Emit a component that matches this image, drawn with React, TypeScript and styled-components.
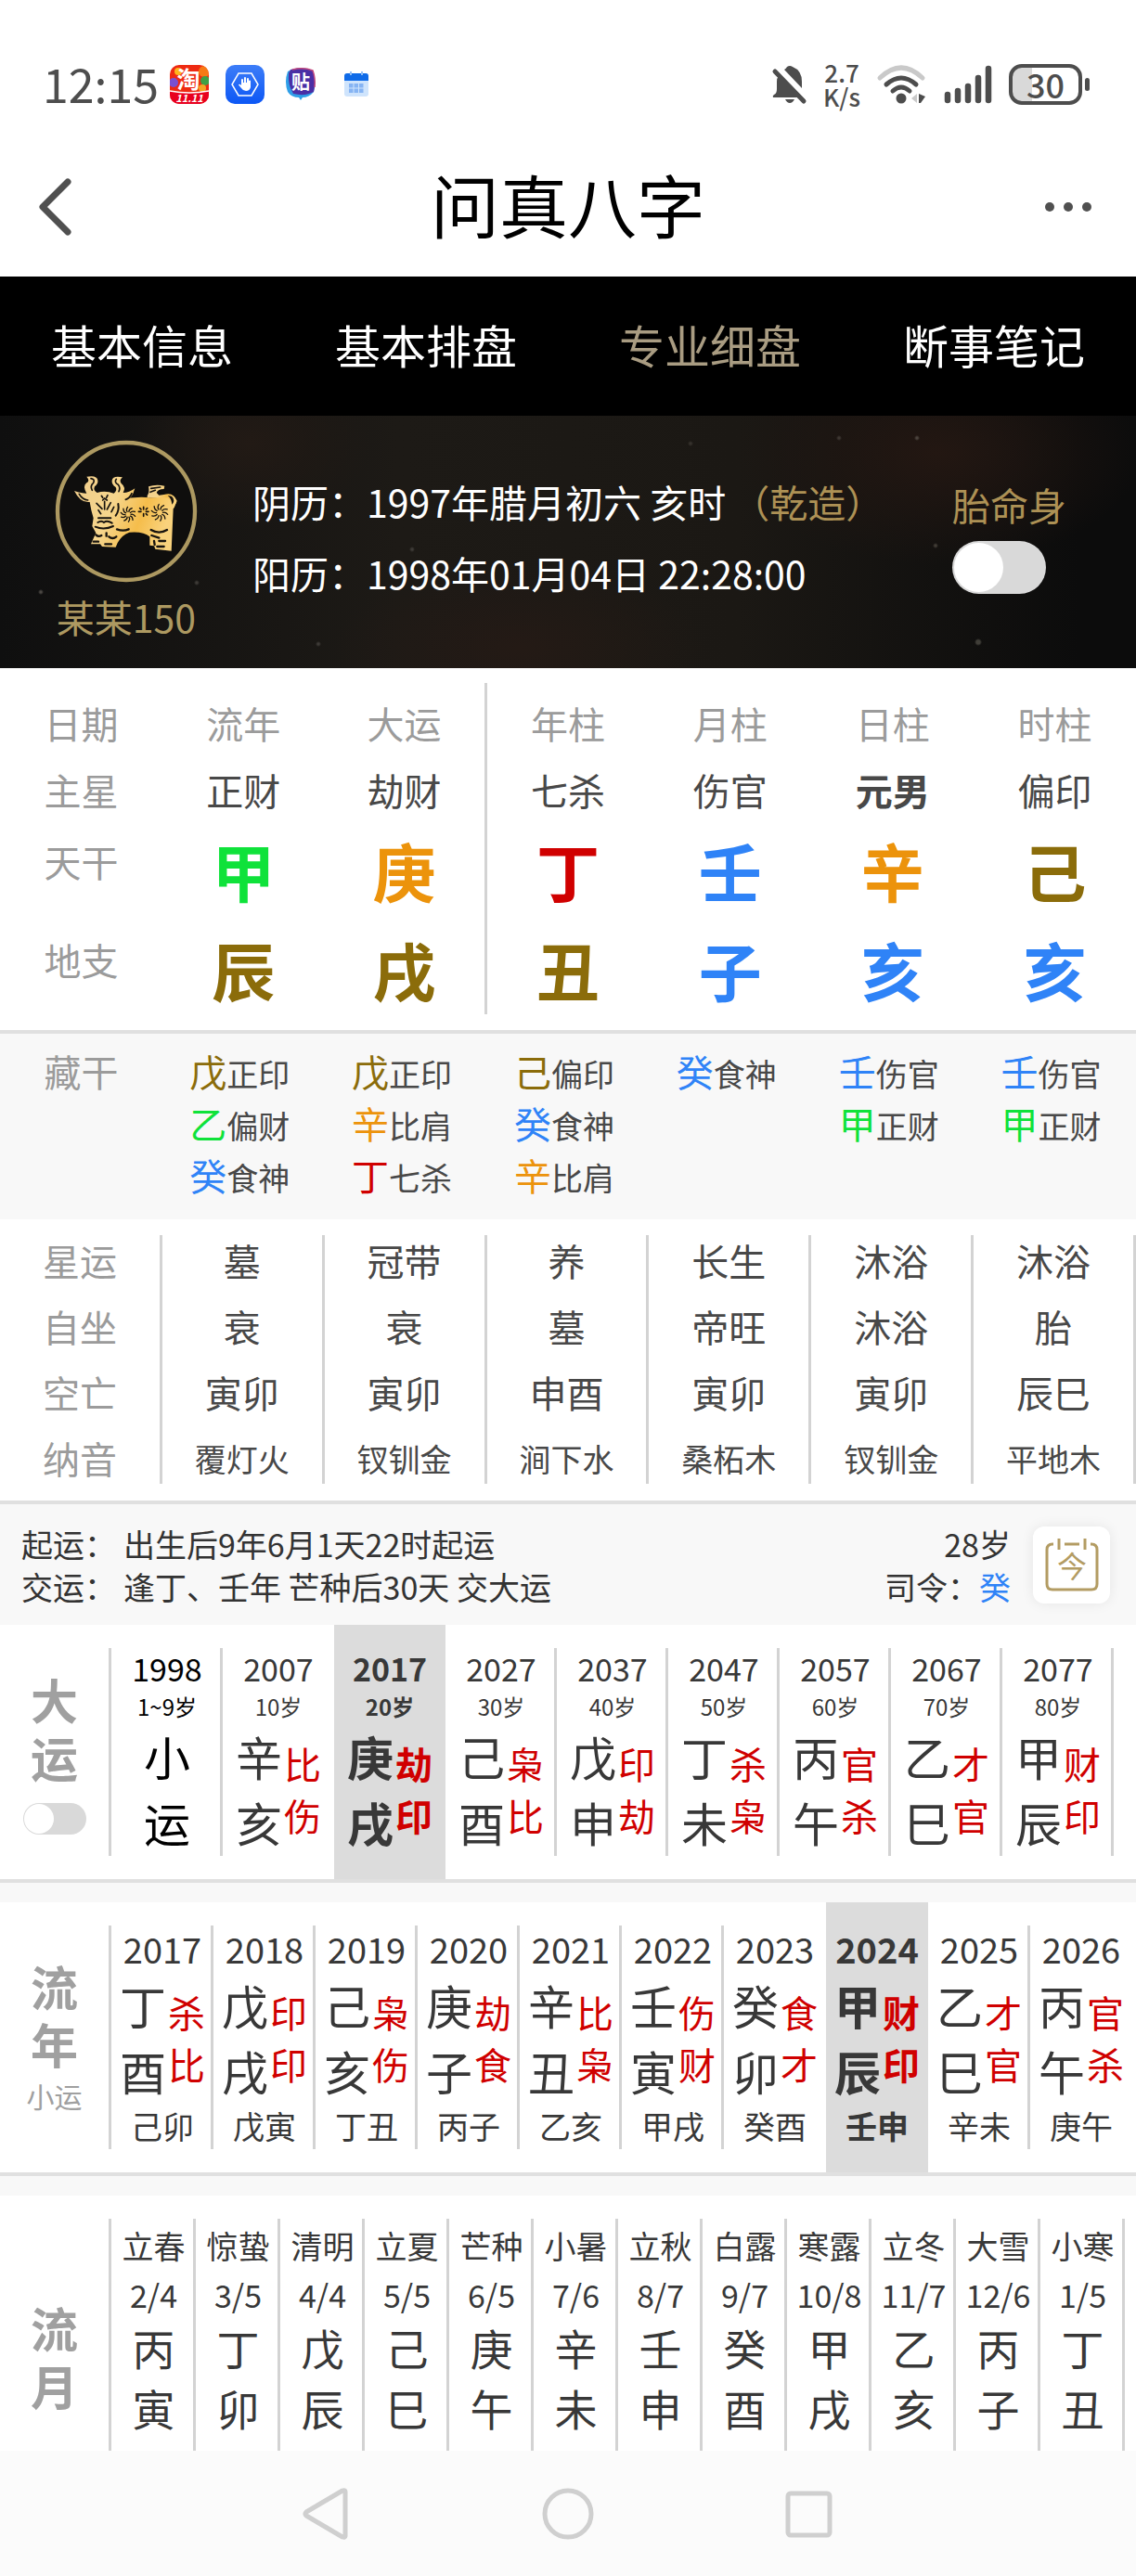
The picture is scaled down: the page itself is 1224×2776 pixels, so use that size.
import React from 'react';
import styled, { createGlobalStyle } from 'styled-components';

const GlobalStyle = createGlobalStyle`
  *, *::before, *::after { box-sizing: border-box; }
  body {
    margin: 0;
    background: #fff;
    color: #333;
    font-family: "Noto Sans CJK SC", "Noto Sans", sans-serif;
  }
  button { font: inherit; color: inherit; background: none; border: 0; padding: 0; margin: 0; }
`;

const GOLD = '#ad9961';
const LINE = '#d3d3d3';

const ELEMENT = {
  wood: '#0fe23a',
  fire: '#d00000',
  earth: '#8b6c0a',
  metal: '#ec930b',
  water: '#2f83f7',
};
type Element = keyof typeof ELEMENT;

const Page = styled.div`
  min-height: 100vh;
  display: flex;
  flex-direction: column;
`;

/* ---------- status bar ---------- */

const StatusBar = styled.div`
  height: 148px;
  padding: 34px 50px 0 46px;
  display: flex;
  align-items: center;
  justify-content: space-between;
  color: #4d4d4d;
`;

const StatusGroup = styled.div<{ $gap: number }>`
  display: flex;
  align-items: center;
  gap: ${(p) => p.$gap}px;
  svg { overflow: visible; }
`;

const Clock = styled.span`
  font-size: 50px;
  line-height: 66px;
  padding-bottom: 4px;
`;

const NetSpeed = styled.span`
  font-size: 26px;
  line-height: 26px;
  text-align: center;
  font-weight: 500;
`;

const Battery = styled.span`
  display: flex;
  align-items: center;
  gap: 3px;
  &::after {
    content: '';
    width: 5px;
    height: 14px;
    border-radius: 3px;
    background: #4d4d4d;
  }
`;

const BatteryBody = styled.span`
  width: 79px;
  height: 44px;
  border: 4px solid #4d4d4d;
  border-radius: 14px;
  background: linear-gradient(to right, #d9d9d9 30%, #fff 30%);
  font-size: 36px;
  line-height: 34px;
  font-weight: 500;
  text-align: center;
`;

/* ---------- title bar ---------- */

const TitleBar = styled.header`
  height: 150px;
  padding: 0 42px;
  display: flex;
  align-items: center;
  justify-content: space-between;
`;

const Title = styled.h1`
  margin: 0;
  padding-bottom: 8px;
  font-size: 74px;
  line-height: 90px;
  font-weight: 400;
  color: #000;
`;

const IconButton = styled.button`
  width: 56px;
  height: 80px;
  display: flex;
  align-items: center;
  justify-content: center;
`;

/* ---------- tabs ---------- */

const Tabs = styled.nav`
  height: 150px;
  background: #000;
  display: grid;
  grid-template-columns: repeat(4, 1fr);
`;

const Tab = styled.button<{ $active?: boolean }>`
  font-size: 49px;
  padding-bottom: 6px;
  color: ${(p) => (p.$active ? '#a99c82' : '#fff')};
`;

/* ---------- profile ---------- */

const Profile = styled.section`
  height: 272px;
  padding-right: 75px;
  display: grid;
  grid-template-columns: 272px 1fr auto;
  align-items: center;
  background-color: #141210;
  background-image:
    radial-gradient(circle at 44px 190px, #4a4743 0 1px, transparent 3px),
    radial-gradient(circle at 212px 180px, #3d3a36 0 1px, transparent 3px),
    radial-gradient(circle at 343px 246px, #3d3a36 0 1px, transparent 3px),
    radial-gradient(circle at 444px 144px, #3d3a36 0 1px, transparent 3px),
    radial-gradient(circle at 744px 30px, #35312c 0 1px, transparent 3px),
    radial-gradient(circle at 904px 24px, #3d3631 0 1px, transparent 3px),
    radial-gradient(circle at 988px 24px, #4a423c 0 1px, transparent 3px),
    radial-gradient(circle at 1008px 140px, #403b35 0 1px, transparent 3px),
    radial-gradient(circle at 1054px 244px, #403e38 0 2px, transparent 4px),
    radial-gradient(ellipse 130px 90px at 270px 30px, #221a15, transparent),
    radial-gradient(ellipse 220px 120px at 1010px 40px, #231712, transparent),
    radial-gradient(ellipse 200px 90px at 560px 250px, #241a15, transparent),
    linear-gradient(to right, #0f0f0f, #1d1a16 35%, #1b1814 65%, #0c0c0c 95%);
`;

const Avatar = styled.div`
  display: flex;
  flex-direction: column;
  align-items: center;
  padding-top: 6px;
  color: ${GOLD};
  font-size: 41px;
  line-height: 72px;
  svg { display: block; }
`;

const Dates = styled.dl`
  margin: 0;
  padding-bottom: 10px;
  display: grid;
  grid-template-columns: auto 1fr;
  font-size: 41px;
  line-height: 77px;
  color: #fff;
  dt, dd { margin: 0; white-space: nowrap; }
`;

const Gender = styled.span`
  margin-left: 6px;
  color: #ad9155;
`;

const SwitchLabel = styled.label`
  display: flex;
  flex-direction: column;
  gap: 12px;
  padding-bottom: 14px;
  font-size: 41px;
  line-height: 56px;
  color: #ad9155;
`;

const Switch = styled.input.attrs({ type: 'checkbox' })<{ $small?: boolean }>`
  appearance: none;
  margin: 0;
  width: ${(p) => (p.$small ? 68 : 101)}px;
  height: ${(p) => (p.$small ? 34 : 57)}px;
  padding: ${(p) => (p.$small ? 1 : 2)}px;
  border-radius: 29px;
  background: #d9d9d9;
  display: flex;
  &::before {
    content: '';
    height: 100%;
    aspect-ratio: 1;
    border-radius: 50%;
    background: #fff;
  }
  &:checked { background: ${GOLD}; justify-content: flex-end; }
`;

/* ---------- chart tables ---------- */

const Panel = styled.section<{ $shade?: boolean; $rule?: boolean; $pad: string }>`
  padding: ${(p) => p.$pad};
  background: ${(p) => (p.$shade ? '#f8f8f8' : '#fff')};
  border-bottom: ${(p) => (p.$rule ? '4px solid #e0e0e0' : '0')};
`;

const ChartTable = styled.table<{ $lines?: 'all' | 'third' }>`
  width: 100%;
  table-layout: fixed;
  border-collapse: separate;
  border-spacing: 0;
  text-align: center;
  th, td { padding: 0; font-weight: 400; vertical-align: top; }
  tr > * {
    border-right: ${(p) => (p.$lines === 'all' ? `3px solid ${LINE}` : '0')};
  }
  tr > :nth-child(3) {
    border-right: ${(p) => (p.$lines ? `3px solid ${LINE}` : '0')};
  }
`;

const Row = styled.tr<{ $h: number; $lh: number }>`
  height: ${(p) => p.$h}px;
  line-height: ${(p) => p.$lh}px;
`;

const RowHead = styled.th`
  font-size: 40px;
  color: #9b9b9b;
`;

const Cell = styled.td<{ $muted?: boolean; $strong?: boolean; $small?: boolean }>`
  && { font-weight: ${(p) => (p.$strong ? 700 : 400)}; }
  font-size: ${(p) => (p.$small ? 34 : 40)}px;
  color: ${(p) => (p.$muted ? '#9b9b9b' : '#484848')};
`;

const Pillar = styled.td<{ $el: Element; $lh: number }>`
  && { font-weight: 700; }
  font-size: 68px;
  line-height: ${(p) => p.$lh}px;
  color: ${(p) => ELEMENT[p.$el]};
`;

const HiddenCell = styled.td`
  font-size: 34px;
  color: #484848;
  div { padding-right: 8px; height: 56px; white-space: nowrap; }
`;

const Stem = styled.span<{ $el: Element }>`
  font-size: 40px;
  color: ${(p) => ELEMENT[p.$el]};
`;

/* ---------- luck summary ---------- */

const Summary = styled.section`
  padding: 20px 28px 20px 23px;
  background: #f8f8f8;
  display: flex;
  align-items: center;
  gap: 24px;
  font-size: 34px;
  line-height: 46px;
`;

const SummaryText = styled.div`
  flex: 1;
  height: 90px;
`;

const SummaryLine = styled.div`
  display: flex;
  gap: 8px;
`;

const Push = styled.span`
  margin-left: auto;
`;

const Commander = styled.span`
  color: ${ELEMENT.water};
`;

const TodayButton = styled.button`
  width: 83px;
  height: 83px;
  border-radius: 12px;
  background: #fff;
  box-shadow: 0 0 14px rgba(0, 0, 0, 0.08);
  display: flex;
  align-items: center;
  justify-content: center;
`;

/* ---------- luck cycle strips ---------- */

const Strip = styled.section`
  display: flex;
  background: #fff;
  overflow: hidden;
`;

const StripGap = styled.div`
  height: 25px;
  background: #f8f8f8;
  border-top: 4px solid #e0e0e0;
`;

const StripHead = styled.div<{ $low?: boolean }>`
  width: 120px;
  flex: none;
  padding: ${(p) => (p.$low ? '25px 0 0' : '25px 0')};
  display: flex;
  & > div {
    flex: 1;
    border-right: 3px solid ${LINE};
    display: flex;
    flex-direction: column;
    align-items: center;
    justify-content: ${(p) => (p.$low ? 'flex-end' : 'center')};
    padding-bottom: ${(p) => (p.$low ? 40 : 0)}px;
  }
`;

const StripTitle = styled.h2`
  margin: 0;
  width: 52px;
  font-size: 51px;
  line-height: 62px;
  font-weight: 700;
  color: #a0a0a0;
  text-align: center;
`;

const StripSub = styled.span`
  font-size: 30px;
  line-height: 50px;
  color: #a0a0a0;
`;

const SwitchSlot = styled.label`
  padding-top: 19px;
`;

const Column = styled.button<{ $w: number; $on?: boolean; $black?: boolean; $line: boolean; $last?: boolean }>`
  width: ${(p) => p.$w}px;
  flex: none;
  display: flex;
  padding: ${(p) => (p.$last ? '25px 0 0' : '25px 0')};
  background: ${(p) => (p.$on ? '#dcdcdc' : 'transparent')};
  font-weight: ${(p) => (p.$on ? 700 : 400)};
  color: ${(p) => (p.$black ? '#000' : '#383838')};
  & > span {
    flex: 1;
    display: flex;
    flex-direction: column;
    align-items: center;
    padding-left: 3px;
    padding-bottom: ${(p) => (p.$last ? 14 : 1)}px;
    border-right: 3px solid ${(p) => (p.$line ? LINE : 'transparent')};
  }
`;

const Line = styled.span<{ $size: number; $lh: number }>`
  font-size: ${(p) => p.$size}px;
  line-height: ${(p) => p.$lh}px;
  white-space: nowrap;
`;

const Pair = styled.span`
  display: flex;
  align-items: center;
  gap: 2px;
  height: 142px;
`;

const Stack = styled.span<{ $size: number; $lh: number; $red?: boolean }>`
  width: ${(p) => p.$size}px;
  display: block;
  font-size: ${(p) => p.$size}px;
  line-height: ${(p) => p.$lh}px;
  color: ${(p) => (p.$red ? '#d00000' : 'inherit')};
  word-break: break-all;
`;

/* ---------- system navigation ---------- */

const SystemNav = styled.nav`
  flex: 1;
  min-height: 134px;
  background: #fbfbfb;
  display: flex;
  align-items: center;
  justify-content: center;
  gap: 204px;
`;

/* ---------- drawings ---------- */

const TaobaoIcon = () => (
  <svg width="42" height="42" viewBox="0 0 42 42">
    <defs><clipPath id="tb"><rect width="42" height="42" rx="10" /></clipPath></defs>
    <g clipPath="url(#tb)">
      <rect width="42" height="42" fill="#ee2a12" />
      <circle cx="9" cy="7" r="4" fill="#ffb51c" />
      <circle cx="4" cy="19" r="5" fill="#7a4fd0" />
      <circle cx="37" cy="7" r="6" fill="#f77a15" />
      <circle cx="38" cy="17" r="5" fill="#3fa045" />
      <circle cx="35" cy="25" r="4" fill="#f5a623" />
      <path d="M0 28Q21 32 42 28V42H0Z" fill="#e8001e" />
      <path d="M0 28Q21 32 42 28" fill="none" stroke="#fff" strokeWidth="1.5" />
    </g>
    <text x="20" y="25" fontSize="25" fontWeight="700" fill="#fff" textAnchor="middle">淘</text>
    <text x="21" y="40" fontSize="11" fontWeight="700" fontStyle="italic" fill="#fff" textAnchor="middle">11.11</text>
  </svg>
);

const HandIcon = () => (
  <svg width="42" height="42" viewBox="0 0 42 42">
    <defs>
      <linearGradient id="hb" x1="0" y1="0" x2="0" y2="1">
        <stop offset="0" stopColor="#3d7df8" /><stop offset="1" stopColor="#0c57f5" />
      </linearGradient>
    </defs>
    <rect width="42" height="42" rx="10" fill="url(#hb)" />
    <path d="M14 9H28L35 21L28 33H14L7 21Z" fill="none" stroke="#fff" strokeWidth="1.5" />
    <path d="M18 21V16M21 20V14M24 21V15M26 22V17.500" stroke="#fff" strokeWidth="2" strokeLinecap="round" />
    <path d="M17 19H27V24Q26 28 22 28Q19 28 17 25L14 21.500Q15 20 17 22Z" fill="#fff" />
  </svg>
);

const TiebaIcon = () => (
  <svg width="42" height="42" viewBox="0 0 42 42">
    <path d="M7 7Q21 0 34 6Q38 18 35 29Q30 35 23 35L21 38L19 35Q11 35 7 29Q3 18 7 7Z" fill="#2f9fe8" />
    <path d="M10 5Q24 1 34 6Q38 18 35 29Q26 34 13 31Q7 22 8 9Z" fill="#4a2fa5" />
    <path d="M12 5Q24 2 34 6Q37 14 36 24" fill="none" stroke="#c2477d" strokeWidth="1.500" />
    <text x="21" y="26" fontSize="20" fontWeight="700" fill="#fff" textAnchor="middle">贴</text>
  </svg>
);

const CalendarIcon = () => (
  <svg width="42" height="42" viewBox="0 0 42 42">
    <rect x="8" y="9" width="26" height="25" rx="3" fill="#cfe4fc" />
    <path d="M8 17V12Q8 9 11 9H31Q34 9 34 12V17Z" fill="#0f6be8" />
    <path d="M15 7V11M27 7V11" stroke="#8fbdf5" strokeWidth="2" />
    {[13, 18.5, 24].map((x) => [20, 25.5].map((y) => (
      <rect key={`${x}-${y}`} x={x} y={y} width="4.500" height="4.500" fill="#86b4f3" />
    )))}
  </svg>
);

const BellOffIcon = () => (
  <svg width="37" height="42" viewBox="0 0 37 42" fill="#4d4d4d">
    <path d="M13 5Q15 4 16 2Q19 0 22 2Q32 6 32 18V25L13 5Z" />
    <path d="M7 12L27 33L29 35H1Q0 33 2 32Q5 31 5 26V18Q5 14 7 12Z" />
    <path d="M3 7L34 39" stroke="#4d4d4d" strokeWidth="5" strokeLinecap="round" />
    <path d="M14 37H24Q22 41 19 41Q16 41 14 37Z" />
  </svg>
);

const WifiIcon = () => (
  <svg width="54" height="42" viewBox="0 0 54 42" fill="none" strokeLinecap="round" strokeWidth="5">
    <path d="M3 14Q26 -8 49 14" stroke="#c9c9c9" />
    <path d="M10 21Q26 7 42 21" stroke="#4d4d4d" />
    <path d="M17 28Q26 20 35 28" stroke="#4d4d4d" />
    <circle cx="26" cy="36" r="5.500" fill="#4d4d4d" />
    <path d="M43 31V41L37 36Z" fill="#c9c9c9" />
    <path d="M45 31L52 34L47 41H45Z" fill="#4d4d4d" />
  </svg>
);

const SignalIcon = () => (
  <svg width="52" height="42" viewBox="0 0 52 42" stroke="#4d4d4d" strokeWidth="6.500" strokeLinecap="round">
    <path d="M4 32V38M15 28V38M26 23V38M37 14V38M48 4V38" />
  </svg>
);

const Pinwheel = ({ x, y, r }: { x: number; y: number; r: number }) => (
  <g transform={`translate(${x} ${y})`} stroke="#17130e" strokeWidth="4" fill="none" strokeLinecap="round">
    {Array.from({ length: 10 }, (_, i) => (
      <path key={i} d={`M${r * 0.4} 0Q${r * 0.7} -3 ${r} 6`} transform={`rotate(${i * 36})`} />
    ))}
  </g>
);

const OxAvatar = () => (
  <svg width="154" height="154" viewBox="9 9 462 462">
    <defs>
      <linearGradient id="ox" x1="0" y1="0" x2="1" y2="0.300">
        <stop offset="0" stopColor="#f0cd8c" />
        <stop offset="0.450" stopColor="#f6d58c" />
        <stop offset="0.750" stopColor="#f5bd4b" />
        <stop offset="1" stopColor="#f9d27c" />
      </linearGradient>
    </defs>
    <circle cx="240" cy="240" r="222" fill="#0f0e0d" stroke={GOLD} strokeWidth="13" />
    <g fill="url(#ox)">
      <path d="M122 210Q92 214 72 174Q96 182 112 182Q98 158 112 148Q124 142 112 128Q146 122 148 140Q150 150 138 160Q132 172 146 180Q172 172 200 182Q212 172 206 162Q192 152 194 140Q196 124 228 130Q216 140 224 150Q240 162 230 180Q250 180 268 166Q258 206 230 208L222 204Q270 190 318 196L370 194Q396 186 402 206Q398 226 392 232L386 368L334 362L330 352L316 350V322Q296 304 250 308Q226 316 212 342L206 356L162 354L156 346L126 346L142 310L130 288L134 262Q126 236 122 210Z" />
      <path d="M308 190Q316 178 312 160Q336 152 364 158L362 168Q342 168 338 180L346 188L362 186Q392 176 404 206Q400 222 390 222Q384 196 366 196H308Z" />
    </g>
    <g fill="none" stroke="#17130e" strokeWidth="5" strokeLinecap="round">
      <path d="M88 184Q98 202 116 204M238 202Q252 198 258 182M126 134Q140 136 134 148Q122 158 130 172M208 136Q200 146 214 154Q222 164 216 176" />
      <path d="M320 166L350 162M318 178L334 172" />
      <path d="M144 214L162 232M190 212L178 234M150 236L158 248M200 226L192 242M170 208V234M160 190L164 196M180 188L176 196M164 204L170 198L178 204" />
      <path d="M214 216Q218 238 206 254M150 262H190M148 276Q160 268 168 276Q178 268 194 278M140 290Q168 302 198 288" strokeWidth="6" />
      <path d="M210 298Q230 306 248 298M320 300Q346 316 372 300M322 318L346 326M142 316Q150 324 160 318M184 322Q196 332 208 322M176 310V320M330 336L332 348M346 336H366M340 354H362M134 338H150M172 346H192" strokeWidth="7" />
      <path d="M296 226V234M296 248V256M280 241H288M304 241H312M284 230L288 234M304 248L308 252M308 230L304 234" />
    </g>
    <Pinwheel x={246} y={250} r={23} />
    <Pinwheel x={348} y={244} r={26} />
    <path d="M374 190Q392 188 394 206Q392 216 388 218Q386 198 374 190Z" fill="#17130e" />
  </svg>
);

const TodayIcon = () => (
  <svg width="58" height="58" viewBox="0 0 58 58" fill="none" stroke="#b39c63" strokeWidth="3">
    <path d="M9 7H8Q2 7 2 13V50Q2 56 8 56H50Q56 56 56 50V13Q56 7 50 7H49M21 7H37M15 1V13M43 1V13" />
    <text x="29" y="43" fontSize="32" fill="#b39c63" stroke="none" textAnchor="middle">今</text>
  </svg>
);

/* ---------- data ---------- */

const pillars: { date: string; star: string; stem: [string, Element]; branch: [string, Element] }[] = [
  { date: '流年', star: '正财', stem: ['甲', 'wood'], branch: ['辰', 'earth'] },
  { date: '大运', star: '劫财', stem: ['庚', 'metal'], branch: ['戌', 'earth'] },
  { date: '年柱', star: '七杀', stem: ['丁', 'fire'], branch: ['丑', 'earth'] },
  { date: '月柱', star: '伤官', stem: ['壬', 'water'], branch: ['子', 'water'] },
  { date: '日柱', star: '元男', stem: ['辛', 'metal'], branch: ['亥', 'water'] },
  { date: '时柱', star: '偏印', stem: ['己', 'earth'], branch: ['亥', 'water'] },
];

const hidden: [string, Element, string][][] = [
  [['戊', 'earth', '正印'], ['乙', 'wood', '偏财'], ['癸', 'water', '食神']],
  [['戊', 'earth', '正印'], ['辛', 'metal', '比肩'], ['丁', 'fire', '七杀']],
  [['己', 'earth', '偏印'], ['癸', 'water', '食神'], ['辛', 'metal', '比肩']],
  [['癸', 'water', '食神']],
  [['壬', 'water', '伤官'], ['甲', 'wood', '正财']],
  [['壬', 'water', '伤官'], ['甲', 'wood', '正财']],
];

const details: [string, string[]][] = [
  ['星运', ['墓', '冠带', '养', '长生', '沐浴', '沐浴']],
  ['自坐', ['衰', '衰', '墓', '帝旺', '沐浴', '胎']],
  ['空亡', ['寅卯', '寅卯', '申酉', '寅卯', '寅卯', '辰巳']],
  ['纳音', ['覆灯火', '钗钏金', '涧下水', '桑柘木', '钗钏金', '平地木']],
];

const decades = [
  ['1998', '1~9岁', '小运', ''],
  ['2007', '10岁', '辛亥', '比伤'],
  ['2017', '20岁', '庚戌', '劫印'],
  ['2027', '30岁', '己酉', '枭比'],
  ['2037', '40岁', '戊申', '印劫'],
  ['2047', '50岁', '丁未', '杀枭'],
  ['2057', '60岁', '丙午', '官杀'],
  ['2067', '70岁', '乙巳', '才官'],
  ['2077', '80岁', '甲辰', '财印'],
];

const years = [
  ['2017', '丁酉', '杀比', '己卯'],
  ['2018', '戊戌', '印印', '戊寅'],
  ['2019', '己亥', '枭伤', '丁丑'],
  ['2020', '庚子', '劫食', '丙子'],
  ['2021', '辛丑', '比枭', '乙亥'],
  ['2022', '壬寅', '伤财', '甲戌'],
  ['2023', '癸卯', '食才', '癸酉'],
  ['2024', '甲辰', '财印', '壬申'],
  ['2025', '乙巳', '才官', '辛未'],
  ['2026', '丙午', '官杀', '庚午'],
];

const months = [
  ['立春', '2/4', '丙寅'],
  ['惊蛰', '3/5', '丁卯'],
  ['清明', '4/4', '戊辰'],
  ['立夏', '5/5', '己巳'],
  ['芒种', '6/5', '庚午'],
  ['小暑', '7/6', '辛未'],
  ['立秋', '8/7', '壬申'],
  ['白露', '9/7', '癸酉'],
  ['寒露', '10/8', '甲戌'],
  ['立冬', '11/7', '乙亥'],
  ['大雪', '12/6', '丙子'],
  ['小寒', '1/5', '丁丑'],
];

const DECADE_ON = 2;
const YEAR_ON = 7;

export default function App() {
  return (
    <Page>
      <GlobalStyle />

      <StatusBar>
        <StatusGroup $gap={12}>
          <Clock>12:15</Clock>
          <StatusGroup $gap={18}>
            <TaobaoIcon />
            <HandIcon />
            <TiebaIcon />
            <CalendarIcon />
          </StatusGroup>
        </StatusGroup>
        <StatusGroup $gap={18}>
          <BellOffIcon />
          <NetSpeed>2.7<br />K/s</NetSpeed>
          <WifiIcon />
          <SignalIcon />
          <Battery><BatteryBody>30</BatteryBody></Battery>
        </StatusGroup>
      </StatusBar>

      <TitleBar>
        <IconButton aria-label="返回">
          <svg width="56" height="64" viewBox="0 0 56 64" fill="none" stroke="#505050" strokeWidth="7" strokeLinecap="round" strokeLinejoin="round">
            <path d="M31 5L4 32L31 59" />
          </svg>
        </IconButton>
        <Title>问真八字</Title>
        <IconButton aria-label="更多">
          <svg width="56" height="12" viewBox="0 0 56 12" fill="#505050">
            <circle cx="5" cy="6" r="5" /><circle cx="25" cy="6" r="5" /><circle cx="45" cy="6" r="5" />
          </svg>
        </IconButton>
      </TitleBar>

      <Tabs>
        <Tab>基本信息</Tab>
        <Tab>基本排盘</Tab>
        <Tab $active>专业细盘</Tab>
        <Tab>断事笔记</Tab>
      </Tabs>

      <Profile>
        <Avatar>
          <OxAvatar />
          某某150
        </Avatar>
        <Dates>
          <dt>阴历：</dt>
          <dd>1997年腊月初六 亥时<Gender>（乾造）</Gender></dd>
          <dt>阳历：</dt>
          <dd>1998年01月04日 22:28:00</dd>
        </Dates>
        <SwitchLabel>
          胎命身
          <Switch />
        </SwitchLabel>
      </Profile>

      <Panel $rule $pad="16px 0 17px">
        <ChartTable $lines="third">
          <tbody>
            <Row $h={86} $lh={86}>
              <RowHead>日期</RowHead>
              {pillars.map((p) => <Cell key={p.date} $muted>{p.date}</Cell>)}
            </Row>
            <Row $h={58} $lh={58}>
              <RowHead>主星</RowHead>
              {pillars.map((p) => <Cell key={p.date} $strong={p.star === '元男'}>{p.star}</Cell>)}
            </Row>
            <Row $h={116} $lh={96}>
              <RowHead>天干</RowHead>
              {pillars.map((p) => <Pillar key={p.date} $el={p.stem[1]} $lh={116}>{p.stem[0]}</Pillar>)}
            </Row>
            <Row $h={97} $lh={77}>
              <RowHead>地支</RowHead>
              {pillars.map((p) => <Pillar key={p.date} $el={p.branch[1]} $lh={97}>{p.branch[0]}</Pillar>)}
            </Row>
          </tbody>
        </ChartTable>
      </Panel>

      <Panel $shade $pad="12px 0 20px">
        <ChartTable>
          <tbody>
            <Row $h={168} $lh={56}>
              <RowHead>藏干</RowHead>
              {hidden.map((list, i) => (
                <HiddenCell key={i}>
                  {list.map(([stem, el, star]) => (
                    <div key={stem}><Stem $el={el}>{stem}</Stem>{star}</div>
                  ))}
                </HiddenCell>
              ))}
            </Row>
          </tbody>
        </ChartTable>
      </Panel>

      <Panel $rule $pad="17px 0 18px">
        <ChartTable $lines="all">
          <tbody>
            {details.map(([name, values], r) => (
              <Row key={name} $h={r === 3 ? 55 : 71} $lh={55}>
                <RowHead>{name}</RowHead>
                {values.map((v, i) => <Cell key={i} $small={r === 3}>{v}</Cell>)}
              </Row>
            ))}
          </tbody>
        </ChartTable>
      </Panel>

      <Summary>
        <SummaryText>
          <SummaryLine>
            <span>起运：</span>
            <span>出生后9年6月1天22时起运</span>
            <Push>28岁</Push>
          </SummaryLine>
          <SummaryLine>
            <span>交运：</span>
            <span>逢丁、壬年 芒种后30天 交大运</span>
            <Push>司令：<Commander>癸</Commander></Push>
          </SummaryLine>
        </SummaryText>
        <TodayButton aria-label="今天"><TodayIcon /></TodayButton>
      </Summary>

      <Strip>
        <StripHead>
          <div>
            <StripTitle>大运</StripTitle>
            <SwitchSlot><Switch $small aria-label="大运" /></SwitchSlot>
          </div>
        </StripHead>
        {decades.map(([year, age, gz, gods], i) => (
          <Column key={year} $w={120} $on={i === DECADE_ON} $black={i === 0} $line={i !== DECADE_ON && i !== DECADE_ON - 1}>
            <span>
              <Line $size={34} $lh={44}>{year}</Line>
              <Line $size={24} $lh={37}>{age}</Line>
              <Pair>
                <Stack $size={50} $lh={71}>{gz}</Stack>
                {gods && <Stack $size={40} $lh={56} $red>{gods}</Stack>}
              </Pair>
            </span>
          </Column>
        ))}
      </Strip>
      <StripGap />

      <Strip>
        <StripHead>
          <div>
            <StripTitle>流年</StripTitle>
            <StripSub>小运</StripSub>
          </div>
        </StripHead>
        {years.map(([year, gz, gods, small], i) => (
          <Column key={year} $w={110} $on={i === YEAR_ON} $line={i !== YEAR_ON && i !== YEAR_ON - 1 && i !== years.length - 1}>
            <span>
              <Line $size={38} $lh={50}>{year}</Line>
              <Pair>
                <Stack $size={50} $lh={71}>{gz}</Stack>
                <Stack $size={40} $lh={56} $red>{gods}</Stack>
              </Pair>
              <Line $size={34} $lh={48}>{small}</Line>
            </span>
          </Column>
        ))}
      </Strip>
      <StripGap />

      <Strip>
        <StripHead $low>
          <div>
            <StripTitle>流月</StripTitle>
          </div>
        </StripHead>
        {months.map(([term, date, gz]) => (
          <Column key={term} $w={91} $line $last>
            <span>
              <Line $size={34} $lh={58}>{term}</Line>
              <Line $size={34} $lh={48}>{date}</Line>
              <Stack $size={46} $lh={65}>{gz}</Stack>
            </span>
          </Column>
        ))}
      </Strip>

      <SystemNav>
        <IconButton aria-label="后退">
          <svg width="56" height="56" viewBox="0 0 56 56" fill="none" stroke="#cfcfcf" strokeWidth="5" strokeLinejoin="round">
            <path d="M48 4V52Q48 54 45 53L6 30Q4 28 6 26L45 3Q48 2 48 4Z" />
          </svg>
        </IconButton>
        <IconButton aria-label="主页">
          <svg width="56" height="56" viewBox="0 0 56 56" fill="none" stroke="#cfcfcf" strokeWidth="5">
            <circle cx="28" cy="28" r="25" />
          </svg>
        </IconButton>
        <IconButton aria-label="最近任务">
          <svg width="56" height="56" viewBox="0 0 56 56" fill="none" stroke="#cfcfcf" strokeWidth="5">
            <rect x="5" y="6" width="45" height="45" rx="3" />
          </svg>
        </IconButton>
      </SystemNav>
    </Page>
  );
}
